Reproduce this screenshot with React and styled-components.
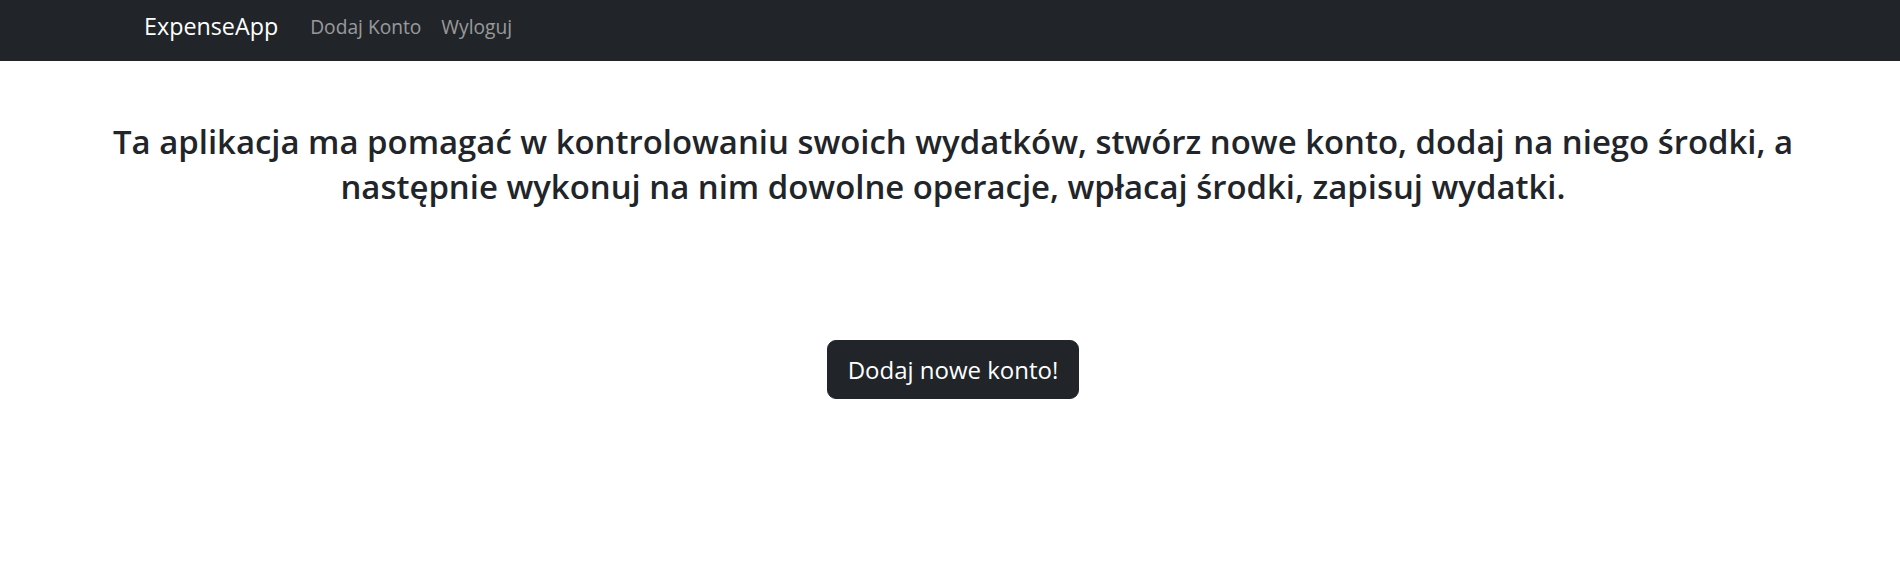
import React from "react";
import styled, { createGlobalStyle } from "styled-components";

const Global = createGlobalStyle`
  html, body { margin: 0; padding: 0; background: #fff; }
  body { font-family: "Open Sans", "Noto Sans", sans-serif; color: #212529; }
  * { box-sizing: border-box; }
`;

const Navbar = styled.nav`
  height: 61px;
  background: #212529;
  display: flex;
  align-items: center;
  padding: 0 0 9px 144px;
`;

const Brand = styled.a`
  color: #fff;
  font-size: 23.3px;
  text-decoration: none;
  margin-right: 22px;
`;

const NavLink = styled.a`
  color: rgba(255, 255, 255, 0.55);
  font-size: 19.2px;
  text-decoration: none;
  padding: 0 10px;
`;

const Main = styled.main`
  display: flex;
  flex-direction: column;
  align-items: center;
  padding: 0 40px 0 46px;
`;

const Heading = styled.h2`
  margin: 58px 0 0;
  font-size: 32.9px;
  font-weight: 600;
  line-height: 45px;
  text-align: center;
  color: #212529;
`;

const Button = styled.button`
  margin-top: 131px;
  height: 59px;
  width: 252px;
  background: #212529;
  color: #fff;
  border: 1px solid #212529;
  border-radius: 9px;
  font-family: inherit;
  font-size: 24px;
  cursor: pointer;
`;

export default function App() {
  return (
    <>
      <Global />
      <Navbar>
        <Brand href="#">ExpenseApp</Brand>
        <NavLink href="#">Dodaj Konto</NavLink>
        <NavLink href="#">Wyloguj</NavLink>
      </Navbar>
      <Main>
        <Heading>
          Ta aplikacja ma pomagać w kontrolowaniu swoich wydatków, stwórz nowe konto, dodaj na niego środki, a następnie wykonuj na nim dowolne operacje, wpłacaj środki, zapisuj wydatki.
        </Heading>
        <Button>Dodaj nowe konto!</Button>
      </Main>
    </>
  );
}
